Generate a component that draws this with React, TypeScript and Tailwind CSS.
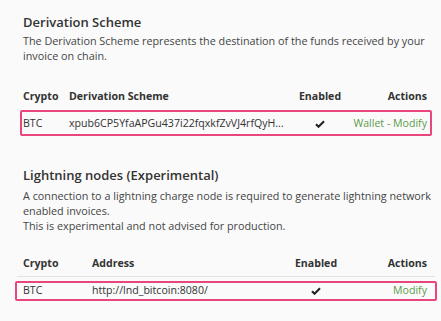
import React from 'react'

const font = { fontFamily: '"Open Sans", "Noto Sans", sans-serif' }

const Check = () => (
  <svg viewBox="0 0 12 10" className="h-[8px] w-[10px] inline-block align-middle" aria-hidden>
    <path d="M1 5.2 L4.2 8.4 L11 1.6" fill="none" stroke="#222" strokeWidth="2.6" />
  </svg>
)

export default function App() {
  return (
    <div className="w-[441px] h-[321px] bg-[#fafafa] text-[#333] overflow-hidden" style={font}>
      <div className="pl-[23px] pr-[14px] pt-[13px]">
        <h3 className="text-[13px] font-semibold leading-[18px] text-[#333]">Derivation Scheme</h3>
        <p className="mt-[2px] -mr-[12px] text-[10.8px] leading-[15px] text-[#444]">
          The Derivation Scheme represents the destination of the funds received by your invoice on chain.
        </p>

        <div className="mt-[25px] text-[10.6px]">
          <div className="grid grid-cols-[46px_221px_60px_77px] font-bold leading-[16px] pb-[6px]">
            <div>Crypto</div>
            <div>Derivation Scheme</div>
            <div className="text-center">Enabled</div>
            <div className="text-right">Actions</div>
          </div>
          <div className="-ml-[3px] -mr-[5px] border-2 border-[#e8467c] rounded-[2px] pl-[1px] pr-[3px]">
            <div className="grid grid-cols-[46px_221px_60px_77px] items-center h-[22px] leading-[16px]">
              <div>BTC</div>
              <div className="whitespace-nowrap overflow-hidden">xpub6CP5YfaAPGu437i22fqxkfZvVJ4rfQyH...</div>
              <div className="text-center"><Check /></div>
              <div className="text-right text-[#5a9c4a] whitespace-nowrap">Wallet - Modify</div>
            </div>
          </div>
        </div>

        <h3 className="mt-[30px] text-[13px] font-semibold leading-[18px] text-[#333]">Lightning nodes (Experimental)</h3>
        <p className="mt-[4px] -mr-[12px] text-[10.8px] leading-[15px] text-[#444]">
          A connection to a lightning charge node is required to generate lightning network enabled invoices.
          <br />
          This is experimental and not advised for production.
        </p>

        <div className="mt-[23px] text-[10.6px]">
          <div className="-ml-[6px] -mr-[8px] pl-[6px] pr-[8px] grid grid-cols-[69px_194px_60px_81px] font-bold leading-[14px] pb-[6px] border-b border-[#e3e3e3]">
            <div>Crypto</div>
            <div>Address</div>
            <div className="text-center">Enabled</div>
            <div className="text-right">Actions</div>
          </div>
          <div className="mt-[4px] -ml-[8px] -mr-[10px] border-2 border-[#e8467c] rounded-[2px] pl-[6px] pr-[8px]">
            <div className="grid grid-cols-[69px_194px_60px_81px] items-center h-[16px] leading-[13px] pb-[2px]">
              <div>BTC</div>
              <div className="whitespace-nowrap">http://lnd_bitcoin:8080/</div>
              <div className="text-center"><Check /></div>
              <div className="text-right text-[#5a9c4a]">Modify</div>
            </div>
          </div>
        </div>
      </div>
    </div>
  )
}
